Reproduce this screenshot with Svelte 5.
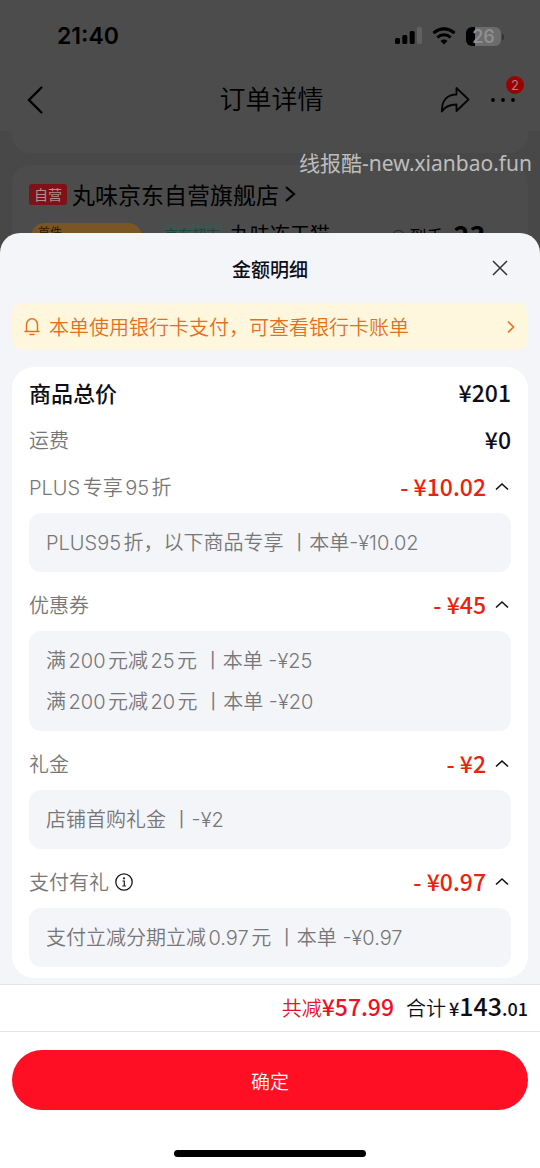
<script lang="ts">
  interface Item {
    label: string;
    amount: string;
    info?: boolean;
    details: string[];
    open: boolean;
  }

  let items: Item[] = $state([
    {
      label: 'PLUS专享95折',
      amount: '10.02',
      details: ['PLUS95折，以下商品专享 丨本单-¥10.02'],
      open: true,
    },
    {
      label: '优惠券',
      amount: '45',
      details: ['满200元减25元 丨本单 -¥25', '满200元减20元 丨本单 -¥20'],
      open: true,
    },
    { label: '礼金', amount: '2', details: ['店铺首购礼金 丨-¥2'], open: true },
    {
      label: '支付有礼',
      amount: '0.97',
      info: true,
      details: ['支付立减分期立减0.97元 丨本单 -¥0.97'],
      open: true,
    },
  ]);
</script>

<div class="screen">
  <div class="order">
    <div class="status">
      <span class="time">21:40</span>
      <div class="indicators">
        <svg width="27" height="18" viewBox="0 0 27 18" aria-hidden="true">
          <rect x="0" y="11" width="5" height="6" rx="1.5" />
          <rect x="7.300" y="8" width="5" height="9" rx="1.5" />
          <rect x="14.700" y="4" width="5" height="13" rx="1.5" />
          <rect x="22" y="0" width="5" height="17" rx="1.5" fill="#606060" />
        </svg>
        <svg width="24" height="18" viewBox="0 0 24 18" aria-hidden="true">
          <path d="M1.500 6.200a15 15 0 0 1 21 0" fill="none" stroke="#000" stroke-width="3.200" />
          <path d="M5.400 10.500a9.500 9.500 0 0 1 13.200 0" fill="none" stroke="#000" stroke-width="3" />
          <path d="M12 17.500l-3.500-3.500a5 5 0 0 1 7 0z" />
        </svg>
        <div class="battery">26</div>
      </div>
    </div>

    <header class="nav">
      <button class="plain back" aria-label="返回">
        <svg width="16" height="28" viewBox="0 0 16 28">
          <path d="M15 1L2 14l13 13" fill="none" stroke="#000" stroke-width="2.400" />
        </svg>
      </button>
      <h1>订单详情</h1>
      <div class="actions">
        <button class="plain" aria-label="分享">
          <svg width="30" height="28" viewBox="0 0 30 28">
            <path
              d="M16.500 2v6.500C7 8.500 1.800 14.500 1.800 25.500 5 20.500 9.500 18.500 16.500 18.500V25L28.500 13.500z"
              fill="none"
              stroke="#050505"
              stroke-width="1.800"
              stroke-linejoin="round"
            />
          </svg>
        </button>
        <button class="plain more" aria-label="更多">
          <svg width="26" height="6" viewBox="0 0 26 6">
            <circle cx="3" cy="3" r="1.900" />
            <circle cx="13" cy="3" r="1.900" />
            <circle cx="23" cy="3" r="1.900" />
          </svg>
          <span class="badge">2</span>
        </button>
      </div>
    </header>

    <div class="panel tail"></div>
    <div class="panel shop">
      <div class="shop-name">
        <span class="self">自营</span>
        <a href="#shop">丸味京东自营旗舰店</a>
        <svg width="12" height="18" viewBox="0 0 12 18" aria-hidden="true">
          <path d="M2 2l8 7-8 7" fill="none" stroke="#000" stroke-width="2.200" />
        </svg>
      </div>
      <div class="goods">
        <span class="pill">首件</span>
        <span class="market">京东超市</span>
        <span class="goods-name">丸味冻干猫</span>
        <span class="price"><i></i>到手<b>¥<em>23</em>.84</b></span>
      </div>
    </div>
  </div>

  <div class="watermark">线报酷-new.xianbao.fun</div>

  <section class="sheet">
    <header class="sheet-head">
      <h2>金额明细</h2>
      <button class="plain close" aria-label="关闭">
        <svg width="16" height="16" viewBox="0 0 16 16">
          <path d="M1 1l14 14M15 1L1 15" stroke="#333" stroke-width="1.500" />
        </svg>
      </button>
    </header>

    <a class="notice" href="#bill">
      <svg width="18" height="20" viewBox="0 0 18 20" aria-hidden="true">
        <path
          d="M2 14.500h14M3.500 14.500V7.500a5.500 5.800 0 0 1 11 0v7M7 17.500h4"
          fill="none"
          stroke="currentColor"
          stroke-width="1.500"
          stroke-linecap="round"
        />
      </svg>
      <span>本单使用银行卡支付，可查看银行卡账单</span>
      <svg width="8" height="14" viewBox="0 0 8 14" aria-hidden="true">
        <path d="M1 1.500L6.500 7 1 12.500" fill="none" stroke="currentColor" stroke-width="1.600" />
      </svg>
    </a>

    <div class="card">
      <div class="row">
        <span class="total-label">商品总价</span>
        <span class="amount">¥201</span>
      </div>
      <div class="row">
        <span class="label">运费</span>
        <span class="amount">¥0</span>
      </div>
      {#each items as item}
        <div class="row">
          <span class="label">
            {item.label}
            {#if item.info}
              <button class="plain info" aria-label="{item.label}说明">
                <svg width="18" height="18" viewBox="0 0 18 18">
                  <circle cx="9" cy="9" r="8.200" fill="none" stroke="#1a1a1a" stroke-width="1.300" />
                  <circle cx="9" cy="5.300" r="1.100" fill="#1a1a1a" />
                  <path d="M7.500 8H9.300v5M7.300 13h3.600" fill="none" stroke="#1a1a1a" stroke-width="1.200" />
                </svg>
              </button>
            {/if}
          </span>
          <button class="plain toggle" aria-expanded={item.open} onclick={() => (item.open = !item.open)}>
            <span class="amount off">- ¥{item.amount}</span>
            <svg class:closed={!item.open} width="14" height="10" viewBox="0 0 14 10" aria-hidden="true">
              <path d="M1 7.500L7 2l6 5.500" fill="none" stroke="#111" stroke-width="1.600" />
            </svg>
          </button>
        </div>
        {#if item.open}
          <div class="details">
            {#each item.details as line}
              <p>{line}</p>
            {/each}
          </div>
        {/if}
      {/each}
    </div>

    <footer>
      <div class="summary">
        <span class="saved">共减<b>¥57.99</b></span>
        <span>合计</span>
        <b class="sum">¥<em>143</em>.01</b>
      </div>
      <div class="confirm">
        <button>确定</button>
      </div>
      <div class="home"></div>
    </footer>
  </section>
</div>

<style>
  :global(body) {
    margin: 0;
    background: #484848;
  }

  .screen {
    position: relative;
    display: flex;
    flex-direction: column;
    min-height: 100vh;
    font-family: Inter, 'Noto Sans CJK SC', sans-serif;
    text-autospace: normal;
  }

  h1,
  h2,
  p {
    margin: 0;
  }

  em,
  i {
    font-style: normal;
  }

  svg {
    display: block;
    flex: none;
  }

  a {
    color: inherit;
    text-decoration: none;
  }

  .plain {
    display: flex;
    align-items: center;
    padding: 0;
    border: 0;
    background: none;
    font: inherit;
    cursor: pointer;
  }

  .order {
    height: 253px;
    overflow: hidden;
    background: #484848;
    color: #000;
  }

  .status {
    display: flex;
    align-items: center;
    justify-content: space-between;
    height: 72px;
    padding: 0 39px 0 57px;
    background: #4c4c4c;
  }

  .time {
    font: 600 23px/28px Inter, sans-serif;
  }

  .indicators {
    display: flex;
    align-items: center;
    gap: 10px;
  }

  .battery {
    position: relative;
    width: 35px;
    border-radius: 6px;
    background: linear-gradient(90deg, #000 9px, #6c6c6c 9px);
    color: #8e8e8e;
    font: 600 18px/19px Inter, sans-serif;
    text-align: center;
  }

  .battery::after {
    content: '';
    position: absolute;
    top: 7px;
    right: -3px;
    width: 2px;
    height: 6px;
    border-radius: 0 2px 2px 0;
    background: #333;
  }

  .nav {
    display: grid;
    grid-template-columns: 1fr auto 1fr;
    align-items: center;
    height: 55px;
    padding: 0 24px 4px 27px;
    background: #4c4c4c;
  }

  .nav h1 {
    font-size: 26px;
    font-weight: 350;
    line-height: 36px;
  }

  .actions {
    display: flex;
    justify-content: flex-end;
    gap: 20px;
  }

  .more {
    position: relative;
  }

  .badge {
    position: absolute;
    top: -10px;
    right: -8px;
    width: 18px;
    border-radius: 50%;
    background: #980404;
    color: #b08080;
    font-size: 13px;
    line-height: 18px;
    text-align: center;
  }

  .panel {
    margin: 0 12px;
    background: #4c4c4c;
  }

  .tail {
    height: 22px;
    border-radius: 0 0 18px 18px;
  }

  .shop {
    margin-top: 12px;
    padding: 9px 17px;
    border-radius: 18px 18px 0 0;
  }

  .shop-name {
    display: flex;
    align-items: center;
    height: 40px;
    font-size: 23px;
    gap: 5px;
  }

  .self {
    padding: 0 5px;
    border-radius: 3px;
    background: #7d1318;
    color: #b09090;
    font-size: 14px;
    line-height: 21px;
  }

  .goods {
    display: flex;
    align-items: flex-start;
    padding-top: 9px;
    font-size: 20px;
    line-height: 24px;
    white-space: nowrap;
  }

  .pill {
    width: 104px;
    margin: 0 20px 0 2px;
    padding-left: 7px;
    border-radius: 14px 14px 0 0;
    background: #7a5627;
    color: #2a1600;
    font-size: 12px;
    line-height: 20px;
  }

  .market {
    margin-right: 8px;
    padding: 0 2px;
    color: #12493a;
    background: #44514e;
    font-size: 14px;
  }

  .goods-name {
    flex: 1;
  }

  .price {
    display: flex;
    align-items: center;
    font-size: 17px;
  }

  .price i {
    width: 13px;
    height: 13px;
    margin-right: 4px;
    border: 1px solid #222;
    border-radius: 50%;
  }

  .price b {
    font-family: 'Noto Sans CJK SC', sans-serif;
  }

  .price em {
    font-size: 27px;
  }

  .watermark {
    position: absolute;
    top: 149px;
    right: 8px;
    color: #bdbdbd;
    font: 400 21px/28px 'Noto Sans', 'Noto Sans CJK SC', sans-serif;
    text-autospace: no-autospace;
  }

  .sheet {
    position: relative;
    display: flex;
    flex: 1;
    flex-direction: column;
    margin-top: -20px;
    border-radius: 20px 20px 0 0;
    background: #f4f5f9;
    color: #0d0e18;
  }

  .sheet-head {
    display: grid;
    grid-template-columns: 1fr auto 1fr;
    align-items: center;
    height: 70px;
    padding: 0 32px;
  }

  .sheet-head h2 {
    grid-column: 2;
    font-size: 19px;
    font-weight: 500;
  }

  .close {
    justify-self: end;
  }

  .notice {
    display: flex;
    align-items: center;
    height: 47px;
    margin: 0 12px;
    padding: 0 13px 0 11px;
    gap: 8px;
    border-radius: 10px;
    background: #fff7dd;
    color: #e2701f;
    font-size: 20px;
    font-weight: 350;
  }

  .notice span {
    flex: 1;
  }

  .card {
    margin: 17px 12px 6px;
    padding: 2px 17px;
    border-radius: 22px;
    background: #fff;
  }

  .row {
    display: flex;
    align-items: center;
    justify-content: space-between;
    height: 47px;
  }

  .total-label {
    padding-bottom: 2px;
    font-size: 22px;
    font-weight: 500;
  }

  .label {
    display: flex;
    align-items: center;
    gap: 6px;
    color: #777;
    font-size: 20px;
    font-weight: 350;
  }

  .amount {
    padding-bottom: 2px;
    font-family: 'Noto Sans CJK SC', sans-serif;
    font-size: 23px;
    font-weight: 500;
    line-height: 30px;
  }

  .off {
    color: #e8230f;
  }

  .toggle {
    gap: 9px;
  }

  .toggle svg {
    margin-right: 2px;
  }

  .closed {
    transform: rotate(180deg);
  }

  .details {
    margin: 3px 0 9px;
    padding: 10px 17px 8px;
    border-radius: 12px;
    background: #f4f5f9;
    color: #777;
    font-size: 20px;
    font-weight: 350;
    line-height: 41px;
  }

  footer {
    display: flex;
    flex: 1;
    flex-direction: column;
    border-top: 1px solid #e4e4e7;
    background: #fff;
  }

  .summary {
    display: flex;
    align-items: baseline;
    justify-content: flex-end;
    height: 46px;
    padding: 0 12px;
    border-bottom: 1px solid #e4e4e7;
    font-size: 20px;
    font-weight: 350;
    line-height: 40px;
  }

  .summary b {
    font-family: 'Noto Sans CJK SC', sans-serif;
    font-size: 23px;
    font-weight: 500;
  }

  .saved {
    margin-right: 12px;
    color: #ea1226;
  }

  .summary .sum {
    margin-left: 3px;
    font-size: 18px;
  }

  .sum em {
    font-size: 25px;
  }

  .confirm {
    padding: 18px 12px 0;
  }

  .confirm button {
    display: block;
    width: 100%;
    height: 60px;
    border: 0;
    border-radius: 30px;
    background: #ff0f23;
    color: #fff;
    font: inherit;
    font-size: 19px;
    font-weight: 350;
    cursor: pointer;
  }

  .home {
    width: 192px;
    height: 7px;
    margin: auto auto 11px;
    border-radius: 4px;
    background: #000;
  }
</style>
